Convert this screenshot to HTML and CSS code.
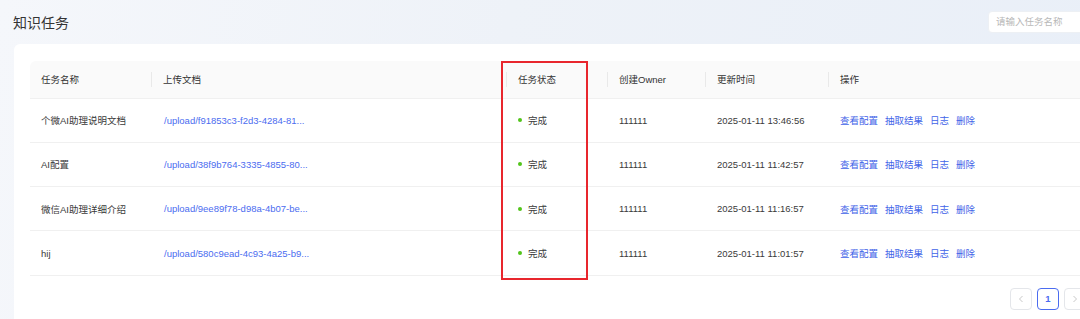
FILE: index.html
```html
<!DOCTYPE html>
<html lang="zh-CN">
<head>
<meta charset="utf-8">
<title>知识任务</title>
<link rel="stylesheet" href="styles.css">
</head>
<body>
<div class="page">
  <div class="topbar">
    <h1 class="title">知识任务</h1>
    <div class="search">请输入任务名称</div>
  </div>
  <div class="card">
    <div class="table-wrap">
      <table class="table">
        <colgroup>
          <col class="c1"><col class="c2"><col class="c3"><col class="c4"><col class="c5"><col class="c6">
        </colgroup>
        <thead>
          <tr>
            <th>任务名称</th>
            <th>上传文档</th>
            <th>任务状态</th>
            <th>创建Owner</th>
            <th>更新时间</th>
            <th>操作</th>
          </tr>
        </thead>
        <tbody>
          <tr>
            <td>个微AI助理说明文档</td>
            <td><a class="link">/upload/f91853c3-f2d3-4284-81...</a></td>
            <td><span class="status"><i class="dot"></i>完成</span></td>
            <td>111111</td>
            <td>2025-01-11 13:46:56</td>
            <td class="actions"><a>查看配置</a><a>抽取结果</a><a>日志</a><a>删除</a></td>
          </tr>
          <tr>
            <td>AI配置</td>
            <td><a class="link">/upload/38f9b764-3335-4855-80...</a></td>
            <td><span class="status"><i class="dot"></i>完成</span></td>
            <td>111111</td>
            <td>2025-01-11 11:42:57</td>
            <td class="actions"><a>查看配置</a><a>抽取结果</a><a>日志</a><a>删除</a></td>
          </tr>
          <tr>
            <td>微信AI助理详细介绍</td>
            <td><a class="link">/upload/9ee89f78-d98a-4b07-be...</a></td>
            <td><span class="status"><i class="dot"></i>完成</span></td>
            <td>111111</td>
            <td>2025-01-11 11:16:57</td>
            <td class="actions"><a>查看配置</a><a>抽取结果</a><a>日志</a><a>删除</a></td>
          </tr>
          <tr>
            <td>hij</td>
            <td><a class="link">/upload/580c9ead-4c93-4a25-b9...</a></td>
            <td><span class="status"><i class="dot"></i>完成</span></td>
            <td>111111</td>
            <td>2025-01-11 11:01:57</td>
            <td class="actions"><a>查看配置</a><a>抽取结果</a><a>日志</a><a>删除</a></td>
          </tr>
        </tbody>
      </table>
      <div class="highlight"></div>
    </div>
    <div class="pager">
      <span class="pg disabled"><svg width="8" height="8" viewBox="0 0 8 8"><path d="M5.5 1 L2.5 4 L5.5 7" fill="none" stroke="currentColor" stroke-width="1"/></svg></span>
      <span class="pg active">1</span>
      <span class="pg disabled"><svg width="8" height="8" viewBox="0 0 8 8"><path d="M2.5 1 L5.5 4 L2.5 7" fill="none" stroke="currentColor" stroke-width="1"/></svg></span>
    </div>
  </div>
</div>
</body>
</html>
```

FILE: styles.css
```css
* { box-sizing: border-box; }
html, body {
  margin: 0;
  padding: 0;
  height: 319px;
  overflow: hidden;
}
body {
  font-family: "Liberation Sans", "Noto Sans CJK SC", sans-serif;
  background: linear-gradient(100deg, #f5f7fb 0%, #eef2f8 45%, #e9eff8 100%);
  color: #333;
}
.page {
  width: 1110px;
}
.topbar {
  display: flex;
  align-items: center;
  height: 44px;
  padding: 0 8px 0 13px;
}
.title {
  margin: 0;
  font-size: 14px;
  font-weight: 400;
  color: #333;
  font-family: "Noto Sans CJK SC", sans-serif;
  line-height: 20px;
}
.search {
  margin-left: auto;
  width: 114px;
  height: 22px;
  background: #fff;
  border-radius: 4px;
  border: 1px solid #edf0f4;
  font-size: 9.5px;
  color: #b8b8b8;
  padding-left: 7px;
  line-height: 20px;
}
.card {
  margin-left: 14px;
  width: 1088px;
  height: 275px;
  background: #fff;
  border-radius: 6px 6px 0 0;
  padding: 17px 16px 0;
}
.table-wrap {
  position: relative;
}
.table {
  width: 1056px;
  border-collapse: collapse;
  table-layout: fixed;
  font-size: 9.5px;
}
.c1 { width: 122px; }
.c2 { width: 355px; }
.c3 { width: 101px; }
.c4 { width: 98px; }
.c5 { width: 123px; }
.c6 { width: 257px; }
.table th {
  position: relative;
  height: 37px;
  background: #fafafa;
  text-align: left;
  font-weight: 400;
  color: #333;
  padding: 0 11px;
  border-bottom: 1px solid #f0f0f0;
}
.table th:first-child { border-top-left-radius: 6px; }
.table th:not(:last-child)::after {
  content: "";
  position: absolute;
  right: 0;
  top: 50%;
  width: 1px;
  height: 15px;
  margin-top: -7px;
  background: #e9e9e9;
}
.table td {
  height: 44.3px;
  padding: 0 11px;
  border-bottom: 1px solid #f0f0f0;
  color: #3a3a3a;
  white-space: nowrap;
}
.link {
  color: #4b6cf0;
  margin-left: 1px;
}
.status {
  display: inline-flex;
  align-items: center;
  gap: 6px;
}
.dot {
  width: 4px;
  height: 4px;
  border-radius: 50%;
  background: #52c41a;
}
.actions a {
  color: #3f63e8;
  margin-right: 7px;
}
.highlight {
  position: absolute;
  left: 471px;
  top: 0;
  width: 87px;
  height: 219px;
  border: 2px solid #e8262d;
  pointer-events: none;
}
.pager {
  display: flex;
  justify-content: flex-end;
  gap: 5px;
  margin-top: 12px;
}
.pg {
  width: 22px;
  height: 22px;
  border: 1px solid #e4e6ea;
  border-radius: 4px;
  display: flex;
  align-items: center;
  justify-content: center;
  font-size: 9.5px;
  color: #c9c9c9;
}
.pg.active {
  border-color: #4b6cf0;
  color: #4b6cf0;
  font-weight: 700;
}
```
